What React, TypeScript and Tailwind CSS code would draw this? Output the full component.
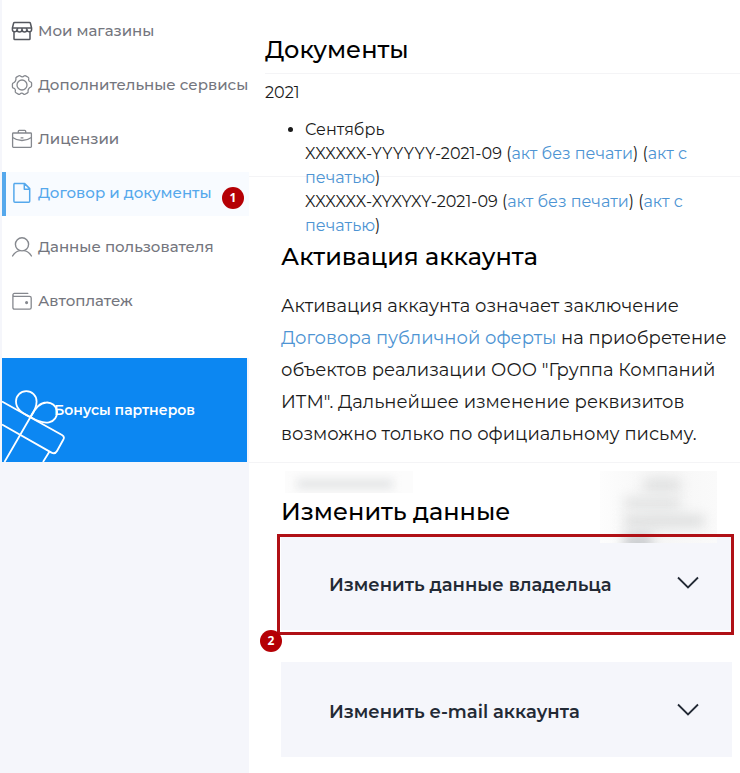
import type { ReactNode } from "react";

interface NavItem {
  label: string;
  icon: ReactNode;
  active?: boolean;
  badge?: number;
}

const navItems: NavItem[] = [
  { label: "Мои магазины", icon: <ShopIcon /> },
  { label: "Дополнительные сервисы", icon: <GearIcon /> },
  { label: "Лицензии", icon: <BriefcaseIcon /> },
  { label: "Договор и документы", icon: <FileIcon />, active: true, badge: 1 },
  { label: "Данные пользователя", icon: <UserIcon /> },
  { label: "Автоплатеж", icon: <WalletIcon /> },
];

const acts = ["XXXXXX-YYYYYY-2021-09", "XXXXXX-XYXYXY-2021-09"];

function ShopIcon() {
  return (
    <svg viewBox="0 0 22 22" className="size-[22px] text-[#54575e]" fill="none" stroke="currentColor" strokeWidth="1.5" strokeLinejoin="round">
      <path d="M3.6 2.5h14.8q.8 0 1 .8l1.2 4.7v1.5a2.3 2.3 0 0 1-4.6 0 2.5 2.5 0 0 1-5 0 2.5 2.5 0 0 1-5 0 2.3 2.3 0 0 1-4.6 0V8l1.2-4.7q.2-.8 1-.8z" />
      <path d="M1.7 8h18.6M6.5 8v1.500M11 8v1.500M15.500 8v1.500M3 11.7v7q0 .8.8.8h14.4q.8 0 .8-.8v-7" />
    </svg>
  );
}

function GearIcon() {
  return (
    <svg viewBox="0 0 22 22" className="size-[22px]" fill="none" stroke="currentColor" strokeWidth="1.3" strokeLinejoin="round">
      <path
        transform="rotate(30 11 11)"
        d="M8.3 2.2Q8.6 1.2 9.6 1.2h2.8q1 0 1.3 1c.4 1.6 1.6 2.2 3.1 1.8q1-.3 1.5.5l1.4 2.4q.5.9-.2 1.6c-1.1 1.2-1.1 3.8 0 5q.7.7.2 1.6l-1.4 2.4q-.5.8-1.5.5c-1.5-.4-2.7.2-3.1 1.8q-.3 1-1.3 1H9.6q-1 0-1.3-1c-.4-1.6-1.6-2.2-3.1-1.8q-1 .3-1.5-.5l-1.4-2.4q-.5-.9.2-1.6c1.1-1.2 1.1-3.8 0-5q-.7-.7-.2-1.6l1.4-2.4q.5-.8 1.5-.5c1.5.4 2.7-.2 3.1-1.8z"
      />
      <circle cx="11" cy="11" r="5" />
    </svg>
  );
}

function BriefcaseIcon() {
  return (
    <svg viewBox="0 0 22 22" className="size-[22px]" fill="none" stroke="currentColor" strokeWidth="1.3" strokeLinejoin="round">
      <rect x="1.6" y="5" width="18.8" height="14.4" rx="0.8" />
      <path d="M7.3 5V3.2q0-.9.9-.9h5.6q.9 0 .9.9V5M1.6 9.5c5.5 4 13.3 4 18.8 0M9.6 9.9h2.8" />
    </svg>
  );
}

function FileIcon() {
  return (
    <svg viewBox="0 0 22 22" className="size-[22px]" fill="none" stroke="currentColor" strokeWidth="1.5" strokeLinejoin="round">
      <path d="M3.3 1.6h10.4l5 5v12.6q0 1-1 1H3.9q-1 0-1-1V2.6q0-1 1-1zM13.3 1.8v5.4h5.2" />
    </svg>
  );
}

function UserIcon() {
  return (
    <svg viewBox="0 0 22 22" className="size-[22px]" fill="none" stroke="currentColor" strokeWidth="1.4" strokeLinecap="round">
      <ellipse cx="11" cy="8.3" rx="6.6" ry="6.6" />
      <path d="M1.6 20c1.8-3.2 4.2-4.8 7.2-5.400M20.4 20c-1.8-3.2-4.2-4.8-7.2-5.400" />
    </svg>
  );
}

function WalletIcon() {
  return (
    <svg viewBox="0 0 22 22" className="size-[22px]" fill="none" stroke="currentColor" strokeWidth="1.3" strokeLinecap="round">
      <path d="M16.8 3.4H3.4a1.5 1.5 0 0 0 0 3h15.2q1.6 0 1.6 1.6v9.6q0 1.6-1.6 1.6H3.5q-1.6 0-1.6-1.6V5" />
      <circle cx="15.6" cy="12.6" r="0.9" fill="currentColor" />
    </svg>
  );
}

function GiftIcon() {
  return (
    <svg viewBox="0 0 64 74" className="absolute bottom-0 left-0 h-[74px] w-16" fill="none" stroke="white" strokeWidth="1.8" strokeLinejoin="round">
      <path d="M0 13.5 60 47q2.8 1.6 1.5 4.2L55 63q-2 3.5-5.5 1.6L0 36.5" />
      <path d="M28.5 29C20 25 14 21 14 13.5a10.3 10.3 0 0 1 20.600 0C34.600 19 32 24 28.5 29L2.5 74" />
      <path d="M28.5 29C33 20 38 14.500 44.5 14.500a10 10 0 0 1 2.5 19.800C41 35.500 35 33 28.5 29M47.5 63.5 41 74" />
    </svg>
  );
}

function Badge({ children, className }: { children: ReactNode; className: string }) {
  return (
    <span
      className={`absolute flex size-[22px] items-center justify-center rounded-full bg-[#b50005] font-['Open_Sans',sans-serif] text-xs font-bold text-white ${className}`}
    >
      {children}
    </span>
  );
}

function Sidebar() {
  return (
    <aside className="w-[249px] shrink-0 bg-[#f5f6fb] pl-0.5">
      <nav className="flex flex-col gap-2.5 bg-white pt-2.5 pb-[34px]">
        {navItems.map((item) => (
          <a
            key={item.label}
            href="#"
            className={`relative flex h-11 items-center gap-[5px] border-l-4 pb-0.5 pl-[5px] text-[15px] font-medium whitespace-nowrap ${
              item.active
                ? "border-[#55a8ec] bg-[#f8fbff] text-[#55a8ec]"
                : "border-transparent text-[#85888e]"
            }`}
          >
            <span className="shrink-0">{item.icon}</span>
            <span className={item.active ? "" : "text-[#74767e]"}>{item.label}</span>
            {item.badge && <Badge className="top-[15px] right-[5px]">{item.badge}</Badge>}
          </a>
        ))}
      </nav>
      <a
        href="#"
        className="relative mr-0.5 flex h-[104px] items-center justify-center overflow-hidden bg-[#0c87f2] text-sm font-semibold text-white"
      >
        <GiftIcon />
        <span className="relative">Бонусы партнеров</span>
      </a>
    </aside>
  );
}

function DocLink({ children }: { children: ReactNode }) {
  return (
    <a href="#" className="text-[#4d94d3]">
      {children}
    </a>
  );
}

function AccordionRow({ title }: { title: string }) {
  return (
    <button
      type="button"
      className="flex h-[95px] w-full items-center justify-between bg-[#f5f6fb] pr-8 pl-12 text-left text-lg font-semibold text-[#232a35]"
    >
      <span className="pt-1">{title}</span>
      <svg viewBox="0 0 24 14" className="h-3.5 w-6" fill="none" stroke="currentColor" strokeWidth="1.8">
        <path d="M2 1.5 12 11.5 22 1.5" />
      </svg>
    </button>
  );
}

function HiddenLabel() {
  return (
    <div aria-hidden="true" className="ml-1 h-[22px] w-32 overflow-hidden bg-[#fcfcfc] px-3 pt-2">
      <div className="h-2.5 w-24 bg-[#e4e5e6] blur-[5px]" />
    </div>
  );
}

function HiddenValue() {
  return (
    <div
      aria-hidden="true"
      className="absolute -top-16 right-[15px] flex h-[72px] w-[117px] flex-col gap-1.5 overflow-hidden bg-linear-to-r from-[#fdfdfd] via-[#f6f6f6] to-[#fafafa] pt-2 pl-6"
    >
      <div className="ml-5 h-3 w-9 shrink-0 bg-[#dfe0e0] blur-[6px]" />
      <div className="h-3 w-14 shrink-0 bg-[#e2e3e3] blur-[6px]" />
      <div className="h-3 w-20 shrink-0 bg-[#dddede] blur-[6px]" />
      <div className="h-5 w-7 shrink-0 bg-[#ccced0] blur-[6px]" />
    </div>
  );
}

export default function App() {
  return (
    <div className="flex min-h-screen bg-white font-['Montserrat','Inter',sans-serif] text-black">
      <Sidebar />

      <main className="relative min-w-0 flex-1 pb-4">
        <div className="absolute inset-x-0 top-[176px] h-px bg-[#f4f4f6]" />

        <section className="relative pl-4">
          <h1 className="border-b border-[#f4f4f6] pt-[34px] pb-[7px] text-2xl font-medium">
            Документы
          </h1>
          <p className="pt-[7px] text-base text-[#1a1a1a]">2021</p>
          <ul className="list-disc pt-[13px] pr-12 pl-10 text-base text-[#1a1a1a]">
            <li>
              Сентябрь
              {acts.map((act) => (
                <div key={act}>
                  {act} (<DocLink>акт без печати</DocLink>) (<DocLink>акт с печатью</DocLink>)
                </div>
              ))}
            </li>
          </ul>
        </section>

        <section className="relative border-b border-[#f4f4f6] pr-2 pb-3 pl-8">
          <h2 className="pt-[3px] text-2xl font-medium">Активация аккаунта</h2>
          <p className="pt-[17px] text-lg leading-8 text-[#1a1a1a]">
            Активация аккаунта означает заключение <DocLink>Договора публичной оферты</DocLink> на
            приобретение объектов реализации ООО "Группа Компаний ИТМ". Дальнейшее изменение
            реквизитов возможно только по официальному письму.
          </p>
        </section>

        <section className="pt-2 pr-2 pl-8">
          <HiddenLabel />
          <h2 className="pt-[3px] text-2xl font-medium">Изменить данные</h2>
          <div className="relative mt-[7px] pb-8">
            <AccordionRow title="Изменить данные владельца" />
            <HiddenValue />
            <div className="pointer-events-none absolute -top-px -right-0.5 -left-1 h-[101px] border-[3px] border-[#b01016]" />
            <Badge className="top-[95px] -left-[21px]">2</Badge>
          </div>
          <AccordionRow title="Изменить e-mail аккаунта" />
        </section>
      </main>
    </div>
  );
}
